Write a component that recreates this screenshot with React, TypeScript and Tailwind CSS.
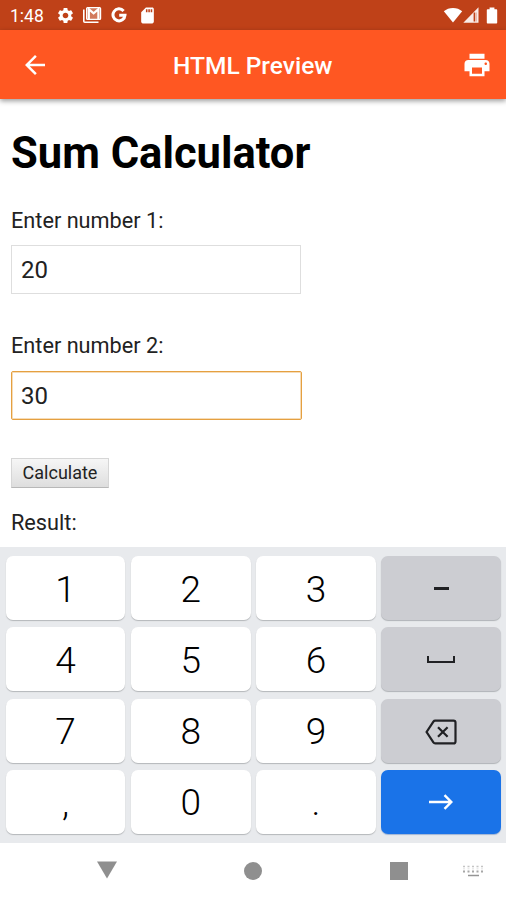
import type { ReactNode } from "react";
import { MdArrowBack, MdPrint, MdSdCard, MdSettings } from "react-icons/md";

function GmailIcon() {
  return (
    <svg viewBox="0 0 20 18" className="h-[18px] w-5" fill="none" stroke="#fff">
      <path d="M1.8 3.5v11.7c0 .6.4 1 1 1h13.7" strokeWidth="1.6" />
      <rect x="4.6" y="1.6" width="14" height="11.8" rx="1" fill="#fff" fillOpacity=".3" strokeWidth="1.2" />
      <path d="M6.8 13V3.2l4.8 4.2 4.8-4.2V13" strokeWidth="2.2" />
    </svg>
  );
}

function GoogleIcon() {
  return (
    <svg viewBox="0 0 16 16" className="size-4" fill="none" stroke="#fff" strokeWidth="3">
      <path d="M12.6 4A6 6 0 1 0 14 8.2H8.2" />
    </svg>
  );
}

function WifiIcon() {
  return (
    <svg viewBox="0 0 20 16" className="h-4 w-5" fill="#fff">
      <path d="M10 15.5.8 4.3C5.5-.2 14.5-.2 19.2 4.3z" />
    </svg>
  );
}

function SignalIcon() {
  return (
    <svg viewBox="0 0 16 16" className="size-4">
      <path d="M15.5.3v15.4H.3z" fill="#fff" fillOpacity=".9" />
      <path d="M10.6 5.5h1.6v9h-1.6z" fill="#bf4118" />
      <path d="M12.8 5.5h1v9h-1z" fill="#bf4118" fillOpacity=".35" />
    </svg>
  );
}

function BatteryIcon() {
  return (
    <svg viewBox="0 0 12 17" className="h-[17px] w-3" fill="#fff">
      <path d="M3.6.5h4.8v1.8h1.8c.6 0 1 .4 1 1v12.2c0 .6-.4 1-1 1H1.8c-.6 0-1-.4-1-1V3.3c0-.6.4-1 1-1h1.8z" />
    </svg>
  );
}

function SpaceIcon() {
  return (
    <svg viewBox="0 0 28 8" className="h-2 w-7" fill="none" stroke="#202124" strokeWidth="2">
      <path d="M1 0v6h26V0" />
    </svg>
  );
}

function BackspaceIcon() {
  return (
    <svg viewBox="0 0 32 26" className="h-[26px] w-8" fill="none" stroke="#202124" strokeWidth="2.2">
      <path d="M10.2 1.6h18.3c1.1 0 2 .9 2 2v18.8c0 1.1-.9 2-2 2H10.2c-.8 0-1.4-.4-1.8-1L1.6 13l6.8-10.4c.4-.6 1-1 1.8-1z" />
      <path d="m13 8.2 9.6 9.6M22.6 8.2 13 17.8" />
    </svg>
  );
}

function EnterIcon() {
  return (
    <svg viewBox="0 0 24 16" className="mb-0.5 h-4 w-6" fill="none" stroke="#fff" strokeWidth="2.4">
      <path d="M0 8h22M15.5 1.2 22.3 8l-6.8 6.8" />
    </svg>
  );
}

function KeyboardIcon() {
  return (
    <svg viewBox="0 0 20 12" className="h-3 w-5" fill="none" stroke="#8a8a8a">
      <path d="M0 1.5h20" strokeWidth="1.5" strokeDasharray="2 2.5" opacity=".5" />
      <path d="M0 3.8h20" strokeWidth="1" strokeDasharray="2 2.5" opacity=".25" />
      <path d="M0 6.5h20" strokeWidth="2" strokeDasharray="2 2.5" opacity=".75" />
      <path d="M5 10.5h11" strokeWidth="1.5" opacity=".9" />
    </svg>
  );
}

const keys: { label: string; icon?: ReactNode; type?: "action" | "enter" }[] = [
  { label: "1" },
  { label: "2" },
  { label: "3" },
  { label: "minus", type: "action", icon: <span className="mb-px h-[3px] w-[15px] bg-[#202124]" /> },
  { label: "4" },
  { label: "5" },
  { label: "6" },
  { label: "space", type: "action", icon: <SpaceIcon /> },
  { label: "7" },
  { label: "8" },
  { label: "9" },
  { label: "backspace", type: "action", icon: <BackspaceIcon /> },
  { label: "," },
  { label: "0" },
  { label: "." },
  { label: "enter", type: "enter", icon: <EnterIcon /> },
];

const keyStyles = {
  digit: "bg-white shadow-[0_1px_1px_#b4b7ba]",
  action: "bg-[#cccdd2] shadow-[0_1px_1px_#b0b3b7]",
  enter: "bg-[#1a73e8] shadow-[0_1px_1px_#9fb4d4]",
};

export default function App() {
  return (
    <div className="flex h-[900px] w-[506px] flex-col overflow-hidden bg-white font-['Roboto',sans-serif] text-black">
      {/* Status bar */}
      <div className="flex h-[30px] shrink-0 items-center bg-[#bf4118] pl-[10px] pr-2 text-white">
        <span className="w-[46px] pt-[3px] text-[17.5px] leading-none">1:48</span>
        <MdSettings className="size-[19px]" />
        <span className="ml-[7px]"><GmailIcon /></span>
        <span className="ml-[9px]"><GoogleIcon /></span>
        <MdSdCard className="ml-[11px] size-[19px]" />
        <div className="ml-auto flex items-center">
          <WifiIcon />
          <SignalIcon />
          <span className="ml-[7px]"><BatteryIcon /></span>
        </div>
      </div>

      {/* App bar */}
      <header className="relative z-10 flex h-[69px] shrink-0 items-center bg-[#ff5722] pl-[20px] pr-[14px] text-white shadow-[0_2px_5px_rgba(0,0,0,0.4)]">
        <MdArrowBack className="size-[30px]" />
        <h1 className="ml-[123px] mt-[3px] text-[24.5px] font-medium">HTML Preview</h1>
        <MdPrint className="ml-auto size-[30px]" />
      </header>

      {/* Page preview */}
      <main className="flex h-[448px] shrink-0 flex-col items-start pl-[11px]">
        <h2 className="mt-[30px] text-[43.5px] font-bold leading-[50px]">Sum Calculator</h2>
        <label htmlFor="n1" className="mt-[29px] text-[21.7px] leading-[26px] text-[#222]">Enter number 1:</label>
        <input id="n1" defaultValue="20" className="mt-[11px] h-[49px] w-[290px] border border-[#dedede] px-[9px] text-[24px] text-[#222]" />
        <label htmlFor="n2" className="mt-[39px] text-[21.7px] leading-[26px] text-[#222]">Enter number 2:</label>
        <input id="n2" defaultValue="30" className="mt-3 h-[49px] w-[291px] rounded-[2px] border border-[#e5a040] px-[9px] text-[24px] text-[#222] shadow-[inset_0_0_0_1px_#f6dcb8]" />
        <button className="mt-[38px] h-[30px] w-[98px] border border-[#d6d6d6] border-b-[#b8b8b8] bg-linear-to-b from-[#f6f6f6] to-[#dedede] text-[18px] leading-none text-[#222]">
          Calculate
        </button>
        <p className="mt-[22px] text-[21.7px] leading-[26px] text-[#222]">Result:</p>
      </main>

      {/* Numeric keyboard */}
      <div className="grid h-[296px] shrink-0 grid-cols-4 grid-rows-4 gap-x-[5.5px] gap-y-[7.3px] bg-[#e8eaed] pb-[9px] pl-[5.6px] pr-[4.8px] pt-[9px]">
        {keys.map((key) => (
          <button
            key={key.label}
            aria-label={key.label}
            className={`flex items-center justify-center rounded-[7px] pt-0.5 text-[37px] font-[350] leading-none ${keyStyles[key.type ?? "digit"]}`}
          >
            {key.icon ?? key.label}
          </button>
        ))}
      </div>

      {/* Navigation bar */}
      <nav className="flex flex-1 items-center pb-0.5 pl-[97px]">
        <svg viewBox="0 0 20 18" className="mb-0.5 h-[18px] w-5" fill="#8f8f8f">
          <path d="M0 .5h20L10 17.5z" />
        </svg>
        <span className="ml-[127px] size-[18px] rounded-full bg-[#8f8f8f]" />
        <span className="ml-[128px] size-[18px] bg-[#8f8f8f]" />
        <span className="ml-[55px]"><KeyboardIcon /></span>
      </nav>
    </div>
  );
}
